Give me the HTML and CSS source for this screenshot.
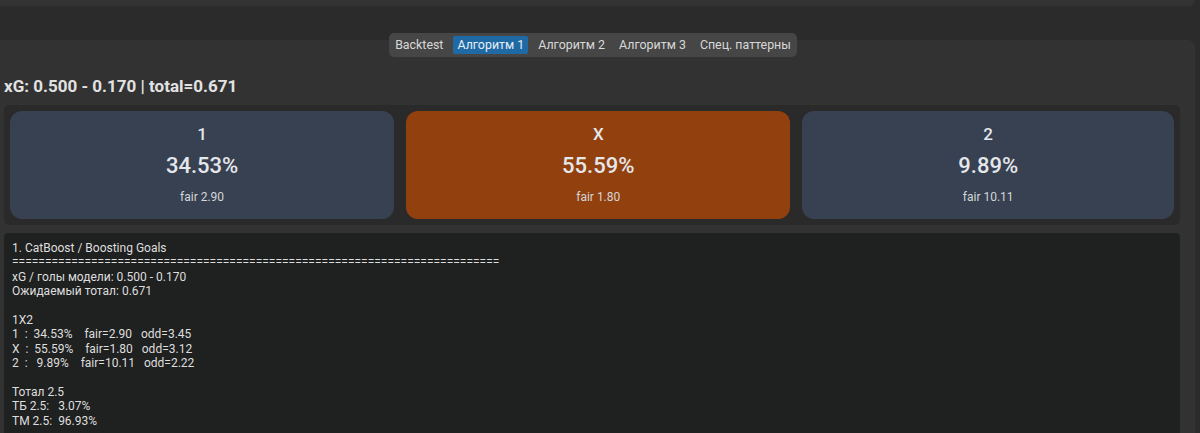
FILE: index.html
```html
<!DOCTYPE html>
<html lang="en">
<head>
    <meta charset="UTF-8">
    <meta name="viewport" content="width=device-width, initial-scale=1.0">
    <title>Прогноз матча</title>
    <link rel="stylesheet" href="styles.css">
</head>
<body>
    <div class="topbar"></div>
    <div class="tabs-row">
        <div class="tabs">
            <button class="tab">Backtest</button>
            <button class="tab active">Алгоритм 1</button>
            <button class="tab">Алгоритм 2</button>
            <button class="tab">Алгоритм 3</button>
            <button class="tab">Спец. паттерны</button>
        </div>
    </div>
    <div class="frame">
        <h3 class="summary">xG: 0.500 - 0.170 | total=0.671</h3>
        <div class="cards">
            <div class="card">
                <div class="card-label">1</div>
                <div class="card-prob">34.53%</div>
                <div class="card-fair">fair 2.90</div>
            </div>
            <div class="card best">
                <div class="card-label">X</div>
                <div class="card-prob">55.59%</div>
                <div class="card-fair">fair 1.80</div>
            </div>
            <div class="card">
                <div class="card-label">2</div>
                <div class="card-prob">9.89%</div>
                <div class="card-fair">fair 10.11</div>
            </div>
        </div>
        <pre class="report">1. CatBoost / Boosting Goals
==========================================================================
xG / голы модели: 0.500 - 0.170
Ожидаемый тотал: 0.671

1X2
1  :  34.53%    fair=2.90   odd=3.45
X  :  55.59%    fair=1.80   odd=3.12
2  :   9.89%    fair=10.11   odd=2.22

Тотал 2.5
ТБ 2.5:   3.07%
ТМ 2.5:  96.93%</pre>
    </div>
</body>
</html>
```

FILE: styles.css
```css
* {
    margin: 0;
    padding: 0;
    box-sizing: border-box;
    font-family: Roboto, "Liberation Sans", sans-serif;
}

body {
    background: #2b2b2b;
    color: #dcdcdc;
    height: 100vh;
    overflow: hidden;
}

.topbar {
    height: 6px;
    margin-right: 5px;
    background: #333333;
    border-bottom-right-radius: 6px;
}

.tabs-row {
    display: flex;
    justify-content: center;
    padding-top: 27px;
    padding-right: 14px;
    margin-bottom: -17px;
    position: relative;
    z-index: 1;
}

.tabs {
    display: flex;
    gap: 6px;
    padding: 3px 2px;
    background: #464646;
    border-radius: 5px;
}

.tab {
    border: none;
    background: transparent;
    color: #d8d8d8;
    font-size: 12.4px;
    padding: 2px 4px;
    line-height: 14px;
    border-radius: 2px;
}

.tab.active {
    background: #1f6aa5;
    color: #e8eef5;
}

.frame {
    background: #323232;
    margin-right: 5px;
    border-top-right-radius: 7px;
    padding: 36px 15px 0 4px;
    height: calc(100vh - 40px);
}

.summary {
    font-size: 17px;
    font-weight: 700;
    line-height: 20px;
    color: #e2e2e2;
    margin-bottom: 9px;
}

.cards {
    display: flex;
    gap: 12px;
    padding: 6px;
    background: #2a2a2a;
    border-radius: 5px;
    margin-bottom: 8px;
}

.card {
    flex: 1 1 auto;
    height: 108px;
    background: #374151;
    border-radius: 12px;
    text-align: center;
    padding-top: 13px;
    color: #e5e7eb;
}

.card.best {
    background: #92400e;
}

.card-label {
    font-size: 17px;
    font-weight: 500;
    line-height: 20px;
}

.card-prob {
    font-size: 22px;
    font-weight: 500;
    line-height: 26px;
    margin-top: 9px;
}

.card-fair {
    font-size: 12px;
    line-height: 14px;
    margin-top: 11px;
    color: #d4d6da;
}

.report {
    background: #1f2020;
    border-radius: 4px;
    padding: 8px 8px;
    height: 220px;
    font-size: 12px;
    line-height: 14.4px;
    color: #dedede;
    white-space: pre;
}
```
